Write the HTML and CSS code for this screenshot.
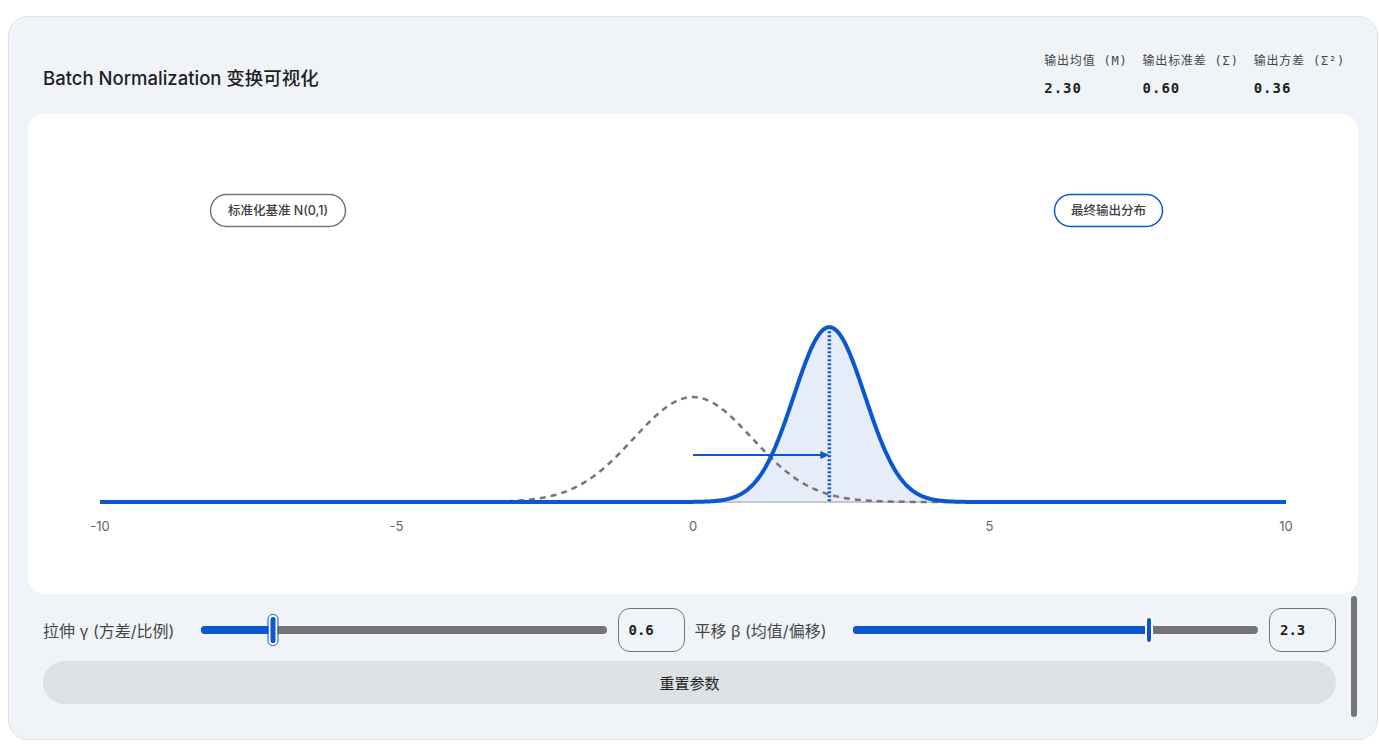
FILE: index.html
```html
<!DOCTYPE html>
<html lang="zh-CN">
<head>
    <meta charset="UTF-8">
    <title>Batch Normalization 变换可视化</title>
    <link rel="stylesheet" href="styles.css">
</head>
<body>
    <div class="card">
        <div class="header">
            <h1>Batch Normalization 变换可视化</h1>
            <div class="stats">
                <div class="stat">
                    <div class="stat-label">输出均值 (M)</div>
                    <div class="stat-value" id="statMean">2.30</div>
                </div>
                <div class="stat">
                    <div class="stat-label">输出标准差 (Σ)</div>
                    <div class="stat-value" id="statStd">0.60</div>
                </div>
                <div class="stat">
                    <div class="stat-label">输出方差 (Σ²)</div>
                    <div class="stat-value" id="statVar">0.36</div>
                </div>
            </div>
        </div>

        <div class="chart-card">
            <svg id="chart" width="1330" height="480" viewBox="0 0 1330 480">
                <path id="outFill" class="out-fill"></path>
                <line class="axis" x1="72" y1="388" x2="1258" y2="388"></line>
                <path id="baseCurve" class="base-curve"></path>
                <path id="outCurve" class="out-curve"></path>
                <line id="meanLine" class="mean-line"></line>
                <line id="shiftArrow" class="shift-arrow"></line>
                <polygon id="arrowHead" class="arrow-head"></polygon>
                <g id="ticks" class="ticks"></g>

                <rect class="pill pill-base" x="182.5" y="80.5" width="135" height="32" rx="16"></rect>
                <text class="pill-text" x="250" y="101">标准化基准 N(0,1)</text>
                <rect class="pill pill-out" x="1026.5" y="80.5" width="108" height="32" rx="16"></rect>
                <text class="pill-text" x="1080.5" y="101">最终输出分布</text>
            </svg>
        </div>

        <div class="controls">
            <div class="control-row">
                <div class="control">
                    <label>拉伸 γ (方差/比例)</label>
                    <div class="slider" id="gammaSlider">
                        <div class="slider-fill"></div>
                        <div class="slider-thumb focused"></div>
                    </div>
                    <div class="num-box">0.6</div>
                </div>
                <div class="control">
                    <label>平移 β (均值/偏移)</label>
                    <div class="slider" id="betaSlider">
                        <div class="slider-fill"></div>
                        <div class="slider-thumb"></div>
                    </div>
                    <div class="num-box">2.3</div>
                </div>
            </div>
            <button class="reset-btn">重置参数</button>
        </div>
        <div class="scrollbar"></div>
    </div>

    <script>
        const gamma = 0.6;
        const beta = 2.3;

        // chart geometry: x domain [-10, 10], baseline at y = 388
        const X0 = 72, X1 = 1258, BASE = 388, YSCALE = 263;
        const sx = x => X0 + (x + 10) * (X1 - X0) / 20;
        const sy = p => BASE - p * YSCALE;
        const pdf = (x, mu, sd) => Math.exp(-0.5 * ((x - mu) / sd) ** 2) / (sd * Math.sqrt(2 * Math.PI));

        function curvePath(mu, sd) {
            let d = '';
            for (let x = -10; x <= 10.0001; x += 0.02) {
                d += (d ? 'L' : 'M') + sx(x).toFixed(2) + ',' + sy(pdf(x, mu, sd)).toFixed(2);
            }
            return d;
        }

        const out = curvePath(beta, gamma);
        document.getElementById('outCurve').setAttribute('d', out);
        document.getElementById('outFill').setAttribute('d', out + `L${X1},${BASE}L${X0},${BASE}Z`);
        document.getElementById('baseCurve').setAttribute('d', curvePath(0, 1));

        const mx = sx(beta);
        const mean = document.getElementById('meanLine');
        mean.setAttribute('x1', mx); mean.setAttribute('x2', mx);
        mean.setAttribute('y1', sy(pdf(beta, beta, gamma)) + 4); mean.setAttribute('y2', BASE);

        const ay = 341;
        const arrow = document.getElementById('shiftArrow');
        arrow.setAttribute('x1', sx(0)); arrow.setAttribute('x2', mx - 6);
        arrow.setAttribute('y1', ay); arrow.setAttribute('y2', ay);
        document.getElementById('arrowHead').setAttribute('points',
            `${mx},${ay} ${mx - 9},${ay - 4} ${mx - 9},${ay + 4}`);

        const ticks = document.getElementById('ticks');
        [-10, -5, 0, 5, 10].forEach(v => {
            const t = document.createElementNS('http://www.w3.org/2000/svg', 'text');
            t.setAttribute('x', sx(v));
            t.setAttribute('y', 417);
            t.textContent = v;
            ticks.appendChild(t);
        });

        // slider positions
        function setSlider(id, value, min, max) {
            const pct = (value - min) / (max - min) * 100;
            const el = document.getElementById(id);
            el.querySelector('.slider-fill').style.width = pct + '%';
            el.querySelector('.slider-thumb').style.left = pct + '%';
        }
        setSlider('gammaSlider', gamma, 0.1, 2.9);
        setSlider('betaSlider', beta, -5, 5);
    </script>
</body>
</html>
```

FILE: styles.css
```css
body {
    margin: 0;
    padding: 16px 1px 14px 8px;
    background: #ffffff;
    font-family: Inter, "Noto Sans CJK SC", sans-serif;
    color: #1f1f1f;
}
.card {
    position: relative;
    background: #f0f4f9;
    border: 1px solid #dde3ea;
    border-radius: 20px;
    padding: 19px 19px 33px 19px;
    height: 670px;
}
.header {
    display: flex;
    justify-content: space-between;
    align-items: center;
    height: 78px;
    padding: 0 13px 0 15px;
}
h1 {
    margin: 4px 0 0 0;
    font-size: 18.5px;
    font-weight: 500;
}
.stats {
    display: flex;
    gap: 15px;
}
.stat {
    display: flex;
    flex-direction: column;
    gap: 10px;
}
.stat-label {
    font-family: "DejaVu Sans Mono", "Noto Sans CJK SC", monospace;
    font-size: 12px;
    line-height: 16px;
    color: #444746;
    letter-spacing: 0.8px;
}
.stat-value {
    font-family: "DejaVu Sans Mono", monospace;
    font-size: 14px;
    font-weight: bold;
    line-height: 18px;
    letter-spacing: 1px;
    color: #1f1f1f;
}
.chart-card {
    background: #ffffff;
    border-radius: 16px;
    height: 480px;
    overflow: hidden;
}
#chart {
    display: block;
}
.out-fill {
    fill: #e6edf9;
    stroke: none;
}
.axis {
    stroke: #c4c7c5;
    stroke-width: 2;
}
.base-curve {
    fill: none;
    stroke: #757575;
    stroke-width: 2.5;
    stroke-dasharray: 6 5;
}
.out-curve {
    fill: none;
    stroke: #0b57d0;
    stroke-width: 4;
    stroke-linejoin: round;
}
.mean-line {
    stroke: #0b57d0;
    stroke-width: 3.5;
    stroke-dasharray: 2 2;
}
.shift-arrow {
    stroke: #0b57d0;
    stroke-width: 2;
}
.arrow-head {
    fill: #0b57d0;
}
.ticks text {
    font-family: Inter, sans-serif;
    font-size: 13px;
    fill: #5f6368;
    text-anchor: middle;
}
.pill {
    fill: #ffffff;
    stroke-width: 1.5;
}
.pill-base {
    stroke: #757575;
}
.pill-out {
    stroke: #0b57d0;
}
.pill-text {
    font-family: Inter, "Noto Sans CJK SC", sans-serif;
    font-size: 12.5px;
    font-weight: 500;
    fill: #3c4043;
    text-anchor: middle;
}
.controls {
    display: flex;
    flex-direction: column;
    gap: 9px;
    margin-top: 14px;
    padding: 0 22px 0 15px;
}
.control-row {
    display: flex;
    gap: 10px;
}
.control {
    flex: 1;
    display: flex;
    align-items: center;
    height: 44px;
}
.control label {
    width: 148px;
    margin-right: 10px;
    font-size: 16px;
    color: #444746;
    white-space: nowrap;
}
.slider {
    position: relative;
    flex: 1;
    height: 8px;
    border-radius: 4px;
    background: #757575;
    margin-right: 11px;
}
.slider-fill {
    height: 100%;
    border-radius: 4px 0 0 4px;
    background: #0b57d0;
}
.slider-thumb {
    position: absolute;
    top: 50%;
    width: 4px;
    height: 24px;
    border: 2px solid #ffffff;
    border-radius: 4px;
    background: #0b57d0;
    transform: translate(-50%, -50%);
}
.slider-thumb.focused {
    width: 5px;
    height: 26px;
    outline: 1.5px solid #0b57d0;
}
.num-box {
    box-sizing: border-box;
    width: 67px;
    height: 44px;
    border: 1px solid #747775;
    border-radius: 12px;
    padding: 0 10px;
    display: flex;
    align-items: center;
    font-family: "DejaVu Sans Mono", monospace;
    font-size: 14px;
    font-weight: bold;
    color: #1f1f1f;
}
.reset-btn {
    height: 43px;
    border: none;
    border-radius: 22px;
    background: #dde1e5;
    font-family: Inter, "Noto Sans CJK SC", sans-serif;
    font-size: 15px;
    color: #1f1f1f;
    cursor: pointer;
}
.scrollbar {
    position: absolute;
    right: 20px;
    top: 579px;
    width: 6px;
    height: 121px;
    border-radius: 3px;
    background: #757575;
}
```
